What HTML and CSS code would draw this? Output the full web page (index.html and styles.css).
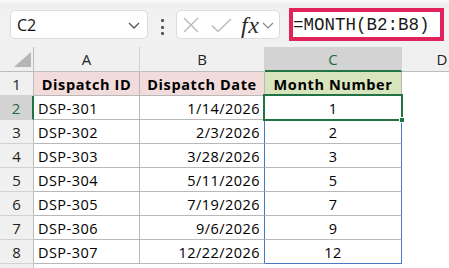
FILE: index.html
```html
<!DOCTYPE html>
<html>
<head>
<meta charset="utf-8">
<link rel="stylesheet" href="styles.css">
</head>
<body>
<div class="toolbar">
  <div class="namebox">
    <span class="ref">C2</span>
    <svg class="chev" width="12" height="7" viewBox="0 0 12 7"><path d="M1 1 L6 6 L11 1" fill="none" stroke="#555" stroke-width="1.3"/></svg>
  </div>
  <div class="dots"><i></i><i></i><i></i></div>
  <div class="fxbox">
    <svg class="xicon" width="16" height="16" viewBox="0 0 16 16"><path d="M1 1 L15 15 M15 1 L1 15" stroke="#b3b3b3" stroke-width="1.2" fill="none"/></svg>
    <svg class="check" width="21" height="15" viewBox="0 0 21 15"><path d="M1 7.5 L7 13.5 L20 1" stroke="#b3b3b3" stroke-width="1.2" fill="none"/></svg>
    <span class="fx">fx</span>
    <svg class="chev2" width="12" height="7" viewBox="0 0 12 7"><path d="M1 1 L6 6 L11 1" fill="none" stroke="#888" stroke-width="1.2"/></svg>
  </div>
  <div class="formula">=MONTH(B2:B8)</div>
</div>
<div class="sheet">
  <div class="corner"><svg width="34" height="25" viewBox="0 0 34 25"><polygon points="31,5 31,20 14,20" fill="#b5b5b5"/></svg></div>
  <div class="ch">A</div>
  <div class="ch">B</div>
  <div class="ch sel">C</div>
  <div class="ch last">D</div>

  <div class="rh">1</div>
  <div class="c hd pink">Dispatch ID</div>
  <div class="c hd pink">Dispatch Date</div>
  <div class="c hd green">Month Number</div>
  <div class="e"></div>

  <div class="rh sel">2</div>
  <div class="c">DSP-301</div>
  <div class="c r">1/14/2026</div>
  <div class="c m cur">1<span class="active"><span class="handle"></span></span></div>
  <div class="e"></div>

  <div class="rh">3</div>
  <div class="c">DSP-302</div>
  <div class="c r">2/3/2026</div>
  <div class="c m">2</div>
  <div class="e"></div>

  <div class="rh">4</div>
  <div class="c">DSP-303</div>
  <div class="c r">3/28/2026</div>
  <div class="c m">3</div>
  <div class="e"></div>

  <div class="rh">5</div>
  <div class="c">DSP-304</div>
  <div class="c r">5/11/2026</div>
  <div class="c m">5</div>
  <div class="e"></div>

  <div class="rh">6</div>
  <div class="c">DSP-305</div>
  <div class="c r">7/19/2026</div>
  <div class="c m">7</div>
  <div class="e"></div>

  <div class="rh">7</div>
  <div class="c">DSP-306</div>
  <div class="c r">9/6/2026</div>
  <div class="c m">9</div>
  <div class="e"></div>

  <div class="rh">8</div>
  <div class="c">DSP-307</div>
  <div class="c r">12/22/2026</div>
  <div class="c m endrow">12</div>
  <div class="e"></div>

  <div class="rh"></div>
  <div class="e"></div>
  <div class="e"></div>
  <div class="e"></div>
  <div class="e"></div>
</div>
</body>
</html>
```

FILE: styles.css
```css
* { box-sizing: border-box; }
html, body { margin: 0; padding: 0; }
body {
  width: 449px;
  height: 268px;
  overflow: hidden;
  background: #ffffff;
  font-family: "Open Sans", "Noto Sans", sans-serif;
}

.toolbar {
  height: 47px;
  display: flex;
  align-items: flex-start;
  padding: 8px 0 0 10px;
  background: linear-gradient(#fbfbfb 0px, #ececec 5px, #f1f1f1 9px, #f1f1f1 100%);
}

.namebox {
  margin-top: 2px;
  width: 138px;
  height: 29px;
  background: #fff;
  border: 1px solid #dcdcdc;
  border-radius: 5px;
  display: flex;
  align-items: center;
  justify-content: space-between;
  padding: 0 7px 0 6px;
}
.ref {
  font-family: "Open Sans", sans-serif;
  font-size: 16px;
  color: #111;
}
.chev { margin-top: 1px; }

.dots {
  margin: 11px 0 0 13px;
  width: 3px;
  display: flex;
  flex-direction: column;
  gap: 3.5px;
}
.dots i {
  display: block;
  width: 3px;
  height: 3px;
  background: #555;
  border-radius: 1px;
}

.fxbox {
  margin: 2px 0 0 12px;
  width: 104px;
  height: 29px;
  background: #fff;
  border: 1px solid #dcdcdc;
  border-radius: 5px;
  display: flex;
  align-items: center;
  padding-left: 6px;
}
.xicon { margin-top: 1px; }
.check { margin-left: 12px; margin-top: 1px; }
.fx {
  margin-left: 9px;
  font-family: "Liberation Serif", serif;
  font-style: italic;
  font-size: 24px;
  line-height: 22px;
  color: #2b2b2b;
  letter-spacing: 0.5px;
}
.chev2 { margin-left: 3px; margin-top: 2px; }

.formula {
  margin-left: 9px;
  width: 155px;
  height: 33px;
  background: #fff;
  border: 4px solid #e0245a;
  display: flex;
  align-items: center;
  padding-left: 0;
  font-family: "Liberation Mono", monospace;
  font-size: 17.5px;
  color: #1a1a1a;
}

.sheet {
  display: grid;
  grid-template-columns: 34px 106px 125px 137px 80px;
  grid-template-rows: 25px repeat(9, 24px);
}

.corner {
  background: #f0f0f0;
  border-right: 1px solid #bdbdbd;
  border-bottom: 1px solid #bdbdbd;
}
.corner svg { display: block; }

.ch {
  background: #f0f0f0;
  border-right: 1px solid #d2d2d2;
  border-bottom: 1px solid #bdbdbd;
  display: flex;
  align-items: center;
  justify-content: center;
  font-size: 15px;
  color: #222;
}
.ch.sel {
  background: #d3d3d3;
  color: #1d6b3b;
  border-bottom: 2px solid #217346;
}
.ch.last { border-right: none; }

.rh {
  background: #f0f0f0;
  border-right: 1px solid #bdbdbd;
  border-bottom: 1px solid #d2d2d2;
  display: flex;
  align-items: center;
  justify-content: center;
  font-size: 15px;
  color: #222;
}
.rh.sel {
  background: #d3d3d3;
  color: #1d6b3b;
  border-right: 2px solid #217346;
}

.c {
  border-right: 1px solid #b8b8b8;
  border-bottom: 1px solid #b8b8b8;
  display: flex;
  align-items: center;
  padding: 1px 4px 0 4px;
  font-size: 14.5px;
  letter-spacing: 0.45px;
  color: #000;
  white-space: nowrap;
}
.c.r {
  justify-content: flex-end;
  border-right-color: #4a78c8;
}
.c.m {
  justify-content: center;
  border-right-color: #4a78c8;
}
.c.endrow { border-bottom-color: #4a78c8; }
.c.hd {
  font-weight: 700;
  justify-content: center;
  letter-spacing: 0.6px;
}
.pink { background: #f2dcdb; }
.green { background: #d8e4bc; }

.e { background: #fff; }

.cur { position: relative; }
.active {
  position: absolute;
  top: -2px;
  left: -2px;
  right: -2px;
  bottom: -2px;
  border: 2px solid #217346;
  pointer-events: none;
}
.handle {
  position: absolute;
  right: -4px;
  bottom: -4px;
  width: 6px;
  height: 6px;
  background: #217346;
  border: 1px solid #fff;
}
```
